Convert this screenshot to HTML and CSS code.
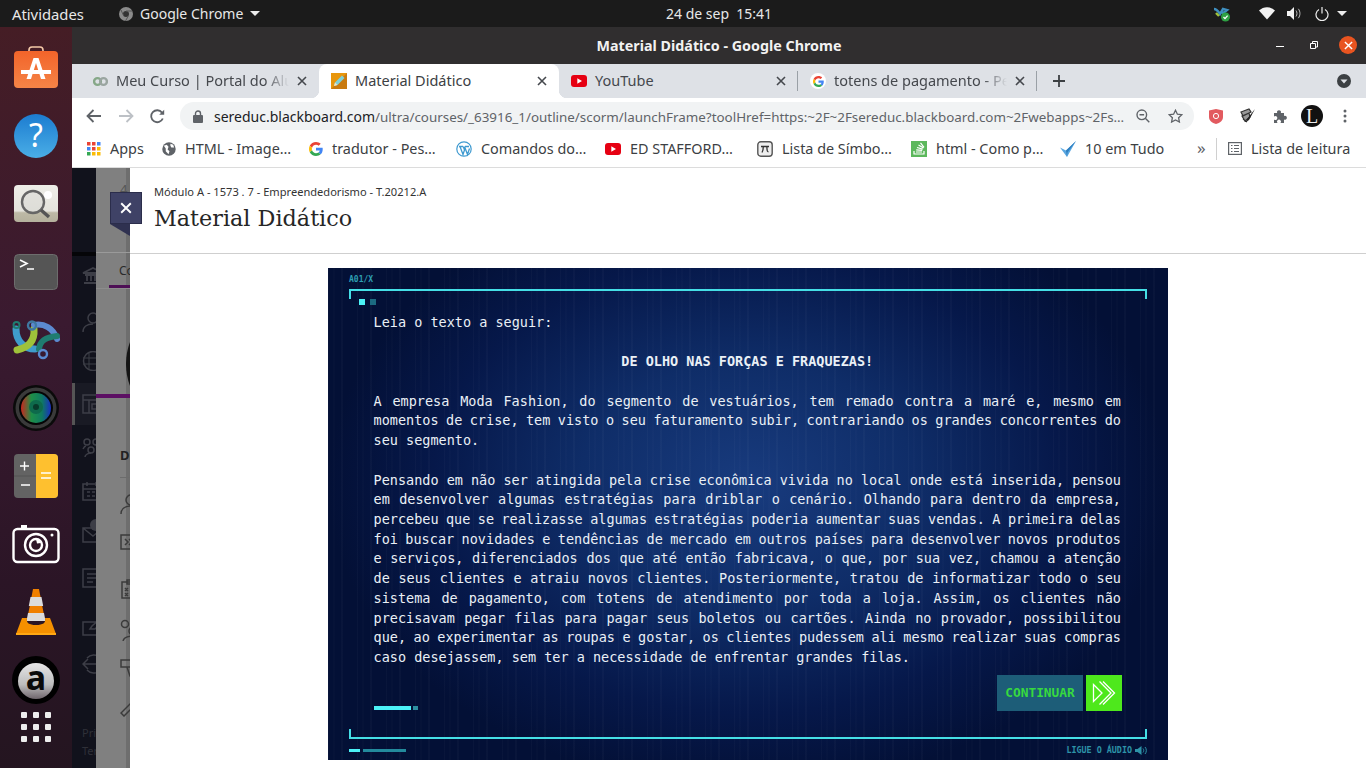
FILE: index.html
```html
<!DOCTYPE html>
<html lang="pt-BR">
<head>
    <meta charset="UTF-8">
    <meta name="viewport" content="width=device-width, initial-scale=1.0">
    <link rel="stylesheet" href="styles.css">
    <title>Material Didático - Google Chrome</title>
</head>
<body>

    <svg class="sprite" width="0" height="0">
        <symbol id="g-logo" viewBox="0 0 48 48">
            <path fill="#EA4335" d="M24 9.5c3.54 0 6.71 1.22 9.21 3.6l6.85-6.85C35.9 2.38 30.47 0 24 0 14.62 0 6.51 5.38 2.56 13.22l7.98 6.19C12.43 13.72 17.74 9.5 24 9.5z"/>
            <path fill="#4285F4" d="M46.98 24.55c0-1.57-.15-3.09-.38-4.55H24v9.02h12.94c-.58 2.96-2.26 5.48-4.78 7.18l7.73 6c4.51-4.18 7.09-10.36 7.09-17.65z"/>
            <path fill="#FBBC05" d="M10.53 28.59c-.48-1.45-.76-2.99-.76-4.59s.27-3.14.76-4.59l-7.98-6.19C.92 16.46 0 20.12 0 24c0 3.88.92 7.54 2.56 10.78l7.97-6.19z"/>
            <path fill="#34A853" d="M24 48c6.48 0 11.93-2.13 15.89-5.81l-7.73-6c-2.15 1.45-4.92 2.3-8.16 2.3-6.26 0-11.57-4.22-13.47-9.91l-7.98 6.19C6.51 42.62 14.62 48 24 48z"/>
        </symbol>
        <symbol id="yt-logo" viewBox="0 0 16 12">
            <rect width="16" height="12" rx="3" fill="#e60012"/>
            <path d="M6.3 3.3 11 6l-4.7 2.7z" fill="#fff"/>
        </symbol>
        <symbol id="x-mark" viewBox="0 0 10 10">
            <path d="M1 1l8 8M9 1l-8 8" stroke="currentColor" stroke-width="1.6" fill="none"/>
        </symbol>
    </svg>

    <!-- barra do sistema -->
    <header class="top-bar">
        <div class="top-left">
            <span class="top-activities">Atividades</span>
            <span class="top-app">
                <svg width="14" height="14" viewBox="0 0 14 14"><circle cx="7" cy="7" r="7" fill="#8b8b8b"/><circle cx="7" cy="7" r="3" fill="#333"/><path d="M7 4h6M4.5 8.5 2 3M9.5 8.5 6.5 14" stroke="#555" stroke-width="1"/></svg>
                Google Chrome
                <i class="caret"></i>
            </span>
        </div>
        <div class="top-clock">24 de sep&nbsp;&nbsp;15:41</div>
        <div class="top-tray">
            <svg class="tray-app" width="18" height="16" viewBox="0 0 18 16"><path d="M1 3c3 0 4 2 6 5l3-5 4 1-5 4" stroke="#3f8fc0" stroke-width="2.4" fill="none"/><path d="M3 7l3 3" stroke="#9fc23a" stroke-width="2.4"/><circle cx="12.5" cy="11" r="4.5" fill="#2ea043"/><path d="M10.5 11l1.5 1.6 2.6-3" stroke="#fff" stroke-width="1.3" fill="none"/></svg>
            <svg class="tray-wifi" width="16" height="13" viewBox="0 0 16 13"><path d="M0 3.6C4.5-.9 11.5-.9 16 3.6L8 12.5z" fill="#f2f2f2"/></svg>
            <svg class="tray-sound" width="15" height="13" viewBox="0 0 15 13"><path d="M0 4h3l4-4v13l-4-4H0z" fill="#f2f2f2"/><path d="M9 3.5c1.3 1.6 1.3 4.4 0 6M11.3 1.8c2.2 2.7 2.2 6.7 0 9.4" stroke="#bbb" stroke-width="1" fill="none"/></svg>
            <svg class="tray-power" width="14" height="14" viewBox="0 0 14 14"><path d="M4 2.4a6 6 0 1 0 6 0M7 0v6.5" stroke="#efefef" stroke-width="1.2" fill="none"/></svg>
            <i class="caret"></i>
        </div>
    </header>

    <div class="desktop">

        <!-- dock -->
        <nav class="dock">
            <div class="dock-item">
                <svg width="44" height="44" viewBox="0 0 44 44"><path d="M15 7V4a3 3 0 0 1 3-3h8a3 3 0 0 1 3 3v3" stroke="#f4c9a8" stroke-width="1.6" fill="none"/><defs><linearGradient id="bag-bg" x1="0" y1="0" x2="0" y2="1"><stop offset="0" stop-color="#f2642a"/><stop offset="1" stop-color="#f58447"/></linearGradient></defs><rect y="5" width="44" height="37" rx="4" fill="url(#bag-bg)"/><path d="M7 24h30v4H7zM19.5 12h5l7 21h-4.5l-5-16-5 16h-4.5z" fill="#fff"/></svg>
            </div>
            <div class="dock-item">
                <svg width="44" height="44" viewBox="0 0 44 44"><defs><linearGradient id="help-bg" x1="0" y1="0" x2="0" y2="1"><stop offset="0" stop-color="#1c7cd0"/><stop offset="1" stop-color="#4aaee6"/></linearGradient></defs><circle cx="22" cy="22" r="22" fill="url(#help-bg)"/><text x="22" y="33" class="help-mark">?</text></svg>
            </div>
            <div class="dock-item">
                <svg width="46" height="38" viewBox="0 0 46 38"><defs><linearGradient id="search-bg" x1="0" y1="0" x2="0" y2="1"><stop offset="0" stop-color="#eeeee8"/><stop offset=".7" stop-color="#e4e3dc"/><stop offset=".75" stop-color="#bdb9a6"/><stop offset="1" stop-color="#b5b19d"/></linearGradient></defs><rect x="1" width="44" height="37" rx="4" fill="url(#search-bg)"/><circle cx="35" cy="10" r="4" fill="#fff"/><circle cx="20" cy="17" r="11" fill="#d8d8d4" fill-opacity=".5" stroke="#666" stroke-width="2.4"/><path d="M28 25l8 7" stroke="#555" stroke-width="3.4"/></svg>
            </div>
            <div class="dock-item">
                <svg width="44" height="36" viewBox="0 0 44 36"><rect x=".5" y=".5" width="43" height="35" rx="4" fill="#555" stroke="#6d6d6d"/><path d="M6 6l7 3.5-7 3.5M13 15h7" stroke="#fff" stroke-width="1.6" fill="none"/></svg>
            </div>
            <div class="dock-item">
                <svg width="48" height="38" viewBox="0 0 48 38"><path d="M4 8c0 12 8 20 19 20" stroke="#3f9ccb" stroke-width="7" stroke-linecap="round" fill="none"/><path d="M22 8c1 14-8 19-17 21" stroke="#9fc23a" stroke-width="7" stroke-linecap="round" fill="none"/><path d="M22 4c10-2 19 3 23 14" stroke="#5b8ad0" stroke-width="6" stroke-linecap="round" fill="none"/><path d="M27 28c1-9 8-12 18-13" stroke="#1f7c70" stroke-width="6" stroke-linecap="round" fill="none"/><circle cx="20" cy="4.5" r="4" fill="none" stroke="#3f78a0" stroke-width="2.4"/><circle cx="4.5" cy="4" r="3" fill="none" stroke="#1f7c70" stroke-width="2"/><circle cx="31" cy="33" r="4" fill="none" stroke="#5b8ad0" stroke-width="2.4"/></svg>
            </div>
            <div class="dock-item">
                <svg width="46" height="46" viewBox="0 0 46 46"><defs><linearGradient id="lens-bg" x1="0" y1="0" x2="1" y2="0"><stop offset="0" stop-color="#c8281e"/><stop offset=".35" stop-color="#1e8f48"/><stop offset=".7" stop-color="#0e7a62"/><stop offset="1" stop-color="#1a2fc0"/></linearGradient></defs><circle cx="23" cy="23" r="23" fill="#0a0a0a"/><circle cx="23" cy="23" r="20.5" fill="#3a3a3a"/><circle cx="23" cy="23" r="17" fill="#050505"/><circle cx="23" cy="23" r="15" fill="url(#lens-bg)"/><circle cx="23" cy="22" r="7" fill="#0e6a4c"/><circle cx="23" cy="22" r="3" fill="#083a2b"/></svg>
            </div>
            <div class="dock-item">
                <svg width="44" height="44" viewBox="0 0 44 44"><rect width="44" height="44" rx="4" fill="#636363"/><path d="M22 0h18a4 4 0 0 1 4 4v36a4 4 0 0 1-4 4H22z" fill="#fec02f"/><path d="M0 22h22" stroke="#555"/><path d="M6 12h9M10.5 7.5v9M7 31h9M27 19h10M27 24h10" stroke="#fff" stroke-width="1.4"/></svg>
            </div>
            <div class="dock-item">
                <svg width="48" height="40" viewBox="0 0 48 40"><path d="M9 4V1h6v3" fill="#fff"/><rect x="1.5" y="5" width="45" height="33" rx="4" fill="none" stroke="#fff" stroke-width="2.4"/><circle cx="40" cy="11" r="1.5" fill="#fff"/><circle cx="24" cy="21" r="11" fill="none" stroke="#fff" stroke-width="2.4"/><circle cx="24" cy="21" r="6" fill="none" stroke="#fff" stroke-width="2.4"/><path d="M24 15a6 6 0 0 1 5 4l-4 .5z" fill="#fff"/></svg>
            </div>
            <div class="dock-item">
                <svg width="40" height="46" viewBox="0 0 40 46"><path d="M17 0h6l5 26H12z" fill="#f08000"/><path d="M14.5 8h11l1.700 9H12.800zM12 24h16l1.500 8h-19z" fill="#dcdcdc"/><path d="M6 29 0 45h40l-6-16h-5c1 5-2 7-9 7s-10-2-9-7z" fill="#f59000"/><path d="M0 44h40v2H0z" fill="#ffa814"/></svg>
            </div>
            <div class="dock-item">
                <svg width="48" height="48" viewBox="0 0 48 48"><defs><linearGradient id="a-bg" x1="0" y1="0" x2="0" y2="1"><stop offset="0" stop-color="#e6e6e6"/><stop offset=".6" stop-color="#bdbdbd"/><stop offset="1" stop-color="#6f666c"/></linearGradient></defs><circle cx="24" cy="24" r="24" fill="#000"/><circle cx="24" cy="25" r="18" fill="url(#a-bg)"/><text x="24" y="34" class="a-mark">a</text></svg>
            </div>
            <div class="dock-grid">
                <i></i><i></i><i></i><i></i><i></i><i></i><i></i><i></i><i></i>
            </div>
        </nav>

        <div class="browser">

            <div class="title-bar">
                <span class="title-text">Material Didático - Google Chrome</span>
                <div class="window-controls">
                    <i class="win-min"></i>
                    <svg class="win-restore" width="8" height="8" viewBox="0 0 8 8"><path d="M2.5 2V.5h5V6H6M.5 2.5h5v5h-5z" stroke="#fff" fill="none"/></svg>
                    <span class="win-close"><svg width="9" height="9"><use href="#x-mark"/></svg></span>
                </div>
            </div>

            <div class="tab-strip">
                <div class="tab tab-first">
                    <svg width="15" height="11" viewBox="0 0 15 11"><circle cx="4.5" cy="5.5" r="3.4" fill="none" stroke="#86a888" stroke-width="2.4"/><circle cx="10.5" cy="5.5" r="3.4" fill="none" stroke="#9aa5a0" stroke-width="2.4"/></svg>
                    <span class="tab-name tab-fade">Meu Curso | Portal do Alu</span>
                    <svg class="tab-x" width="10" height="10"><use href="#x-mark"/></svg>
                </div>
                <div class="tab tab-active">
                    <svg width="16" height="16" viewBox="0 0 16 16"><rect width="16" height="16" fill="#e8960c"/><path d="M0 16 16 0v16z" fill="#c97a10"/><path d="M3 13l1-3.5 7-7 2.5 2.5-7 7z" fill="#7fd0d8"/><path d="M3 13l1-3.5 2.5 2.5z" fill="#f4e3c0"/></svg>
                    <span class="tab-name">Material Didático</span>
                    <svg class="tab-x" width="10" height="10"><use href="#x-mark"/></svg>
                </div>
                <div class="tab tab-sep">
                    <svg width="16" height="12"><use href="#yt-logo"/></svg>
                    <span class="tab-name">YouTube</span>
                    <svg class="tab-x" width="10" height="10"><use href="#x-mark"/></svg>
                </div>
                <div class="tab tab-sep">
                    <span class="tab-g"><svg width="11" height="11"><use href="#g-logo"/></svg></span>
                    <span class="tab-name tab-fade">totens de pagamento - Pe</span>
                    <svg class="tab-x" width="10" height="10"><use href="#x-mark"/></svg>
                </div>
                <svg class="tab-new" width="14" height="14" viewBox="0 0 14 14"><path d="M7 1v12M1 7h12" stroke="#3c4043" stroke-width="1.8"/></svg>
                <svg class="tab-search" width="14" height="14" viewBox="0 0 14 14"><circle cx="7" cy="7" r="7" fill="#3c4043"/><path d="M3.5 5.5h7L7 9.5z" fill="#dee1e6"/></svg>
            </div>

            <div class="tool-bar">
                <div class="nav-buttons">
                    <svg width="16" height="14" viewBox="0 0 16 14"><path d="M15 7H2M7.5 1 1.5 7l6 6" stroke="#5f6368" stroke-width="1.8" fill="none"/></svg>
                    <svg width="16" height="14" viewBox="0 0 16 14"><path d="M1 7h13M8.5 1l6 6-6 6" stroke="#bdc1c6" stroke-width="1.8" fill="none"/></svg>
                    <svg width="15" height="15" viewBox="0 0 15 15"><path d="M12.8 9.5A6 6 0 1 1 12 3.6" stroke="#5f6368" stroke-width="1.8" fill="none"/><path d="M14.2.8v5h-5z" fill="#5f6368"/></svg>
                </div>
                <div class="omnibox">
                    <svg width="10" height="13" viewBox="0 0 10 13"><path d="M2.5 5V3.5a2.5 2.5 0 0 1 5 0V5" stroke="#5f6368" stroke-width="1.4" fill="none"/><rect y="5" width="10" height="8" rx="1" fill="#5f6368"/></svg>
                    <span class="url"><b>sereduc.blackboard.com</b>/ultra/courses/_63916_1/outline/scorm/launchFrame?toolHref=https:~2F~2Fsereduc.blackboard.com~2Fwebapps~2Fs…</span>
                    <svg class="omni-zoom" width="14" height="14" viewBox="0 0 14 14"><circle cx="5.8" cy="5.8" r="4.8" fill="none" stroke="#5f6368" stroke-width="1.4"/><path d="M3.5 5.8h4.6M9.3 9.3l4 4" stroke="#5f6368" stroke-width="1.4"/></svg>
                    <svg width="15" height="14" viewBox="0 0 15 14"><path d="M7.5 1.2l1.900 4 4.400.5-3.200 3 .8 4.300-3.900-2.100-3.900 2.100.8-4.300-3.200-3 4.400-.5z" fill="none" stroke="#5f6368" stroke-width="1.3"/></svg>
                </div>
                <div class="extensions">
                    <svg width="14" height="15" viewBox="0 0 14 15"><path d="M0 1.5 7 0l7 1.500V8c0 3.500-3 6-7 7-4-1-7-3.500-7-7z" fill="#e25a5f"/><circle cx="7" cy="7" r="2.6" fill="none" stroke="#fff" stroke-width="1"/></svg>
                    <svg width="16" height="16" viewBox="0 0 16 16"><path d="M1 4l8-3 2 3-8 4zM2 8l7-3 1 4-5 4zM3 11l4 3" fill="#999" stroke="#333" stroke-width="1.2"/><path d="M15 1 7 11l-1 3 3-2z" fill="#222"/></svg>
                    <svg width="14" height="14" viewBox="0 0 14 14"><path d="M1 4h3.200a2 2 0 1 1 3.600 0H11v3a2 2 0 1 1 0 3.600V14H7.500a2 2 0 1 0-3 0H1v-3.500a2 2 0 1 0 0-3z" fill="#5f6368"/></svg>
                    <span class="avatar">L</span>
                    <svg width="4" height="14" viewBox="0 0 4 14"><circle cx="2" cy="2" r="1.5" fill="#5f6368"/><circle cx="2" cy="7" r="1.5" fill="#5f6368"/><circle cx="2" cy="12" r="1.5" fill="#5f6368"/></svg>
                </div>
            </div>

            <div class="bookmarks">
                <div class="bm-list">
                    <div class="bm">
                        <svg width="14" height="14" viewBox="0 0 14 14"><path d="M0 0h3.500v3.500H0zM5 0h3.500v3.500H5zM5 5h3.500v3.500H5z" fill="#ea4335"/><path d="M10 0h3.500v3.500H10zM0 5h3.500v3.500H0z" fill="#4285f4"/><path d="M10 5h3.500v3.500H10zM5 10h3.500v3.500H5zM10 10h3.500v3.500H10z" fill="#fbbc05"/><path d="M0 10h3.500v3.500H0z" fill="#34a853"/></svg>
                        Apps
                    </div>
                    <div class="bm">
                        <svg width="14" height="14" viewBox="0 0 15 15"><circle cx="7.5" cy="7.5" r="7.2" fill="#5f6368"/><path d="M2 4l3-1 2 2-1 3 2 2-1 3-3-3V7zM9 2l3 1 1 3-3 0-1-2z" fill="#fff"/></svg>
                        HTML - Image…
                    </div>
                    <div class="bm">
                        <svg width="14" height="14"><use href="#g-logo"/></svg>
                        tradutor - Pes…
                    </div>
                    <div class="bm">
                        <svg width="16" height="16" viewBox="0 0 16 16"><circle cx="8" cy="8" r="7.2" fill="none" stroke="#3f9ad0" stroke-width="1.2"/><path d="M3 5.500h4M9 5.500h4M4 5.500l3 8 1.500-4.500-1.200-3.500M8.500 5.500l3 8 2-6" fill="none" stroke="#3f9ad0" stroke-width="1.3"/></svg>
                        Comandos do…
                    </div>
                    <div class="bm">
                        <svg width="16" height="12"><use href="#yt-logo"/></svg>
                        ED STAFFORD…
                    </div>
                    <div class="bm">
                        <svg width="16" height="16" viewBox="0 0 16 16"><rect x=".8" y=".8" width="14.4" height="14.4" rx="3" fill="#eee" stroke="#555" stroke-width="1.4"/><path d="M4 5.500h8M6.300 5.500c0 3-.3 4.500-1.300 6M10 5.500c-.2 2.500 0 5 1.500 5.500" stroke="#333" stroke-width="1.3" fill="none"/></svg>
                        Lista de Símbo…
                    </div>
                    <div class="bm">
                        <svg width="16" height="16" viewBox="0 0 16 16"><rect width="16" height="16" fill="#5cb85c"/><path d="M3 10v3h10v-3M5 11h6M5.200 8.800l6 .6M6 6.500l5.700 1.600M7.500 4l5 3M9.500 1.800l3.500 4.600" stroke="#fff" stroke-width="1.2" fill="none"/></svg>
                        html - Como p…
                    </div>
                    <div class="bm">
                        <svg width="16" height="16" viewBox="0 0 16 16"><path d="M0 6.500 6 9.500 16 0 7 16z" fill="#5aa7e0"/><path d="M6 9.500 16 0 7.500 11.500 7 16z" fill="#2f7fc0"/></svg>
                        10 em Tudo
                    </div>
                </div>
                <span class="bm-more">»</span>
                <div class="bm-reading">
                    <svg width="14" height="13" viewBox="0 0 14 13"><rect x=".6" y=".6" width="12.8" height="11.8" fill="none" stroke="#5f6368" stroke-width="1.2"/><path d="M3 3.500h1.500M6 3.500h5M3 6.500h1.500M6 6.500h5M3 9.500h1.500M6 9.500h5" stroke="#5f6368" stroke-width="1.2"/></svg>
                    Lista de leitura
                </div>
            </div>

            <div class="page">

                <!-- pagina do curso atras do painel, escurecida -->
                <div class="behind">
                    <div class="dim-nav">
                        <div class="dim-nav-head"></div>
                        <svg width="22" height="18" viewBox="0 0 22 18"><path d="M1 6 11 1l10 5zM3 8h16M5 8v6M9 8v6M13 8v6M17 8v6M2 16h18" stroke="#3d3e47" stroke-width="1.8" fill="none"/></svg>
                        <svg width="22" height="20" viewBox="0 0 22 20"><circle cx="11" cy="6" r="5" fill="none" stroke="#3d3e47" stroke-width="1.5"/><path d="M1 20c0-5 4-8 10-8" stroke="#3d3e47" stroke-width="1.5" fill="none"/></svg>
                        <svg width="22" height="20" viewBox="0 0 22 20"><circle cx="11" cy="10" r="9.5" fill="none" stroke="#3d3e47" stroke-width="1.5"/><path d="M1 7h20M1 13h20M7 1v18M15 1v18" stroke="#3d3e47"/></svg>
                        <div class="dim-nav-active"><svg width="22" height="20" viewBox="0 0 22 20"><path d="M1 1h20v18H1zM1 6h20M7 6v13M10 10h6v5h-6z" fill="none" stroke="#3d3e47" stroke-width="1.5"/></svg></div>
                        <svg width="22" height="20" viewBox="0 0 22 20"><circle cx="5" cy="5" r="3" fill="none" stroke="#3d3e47" stroke-width="1.5"/><circle cx="14" cy="5" r="3" fill="none" stroke="#3d3e47" stroke-width="1.5"/><circle cx="9" cy="13" r="3" fill="none" stroke="#3d3e47" stroke-width="1.5"/><path d="M1 12c1-2 2-3 3-3M3 20c0-2 3-4 6-4" stroke="#3d3e47" stroke-width="1.5" fill="none"/></svg>
                        <svg width="22" height="20" viewBox="0 0 22 20"><path d="M1 3h20v16H1zM1 8h20M5 1v4M14 1v4M5 11h3M10 11h3M5 15h3M10 15h3" fill="none" stroke="#3d3e47" stroke-width="1.6"/></svg>
                        <svg width="22" height="24" viewBox="0 0 22 24"><path d="M1 9h20v14H1zM1 9l10 8 10-8" fill="none" stroke="#3d3e47" stroke-width="1.5"/><circle cx="14" cy="6" r="6" fill="#3d3e47"/></svg>
                        <svg width="22" height="20" viewBox="0 0 22 20"><path d="M1 1h20v18H1zM5 6h12M5 10h12M5 14h6" fill="none" stroke="#3d3e47" stroke-width="1.5"/></svg>
                        <svg width="22" height="18" viewBox="0 0 22 18"><path d="M1 4h16v13H1zM8 11l2-3 8-7 3 2-8 8z" fill="none" stroke="#3d3e47" stroke-width="1.5"/></svg>
                        <svg width="22" height="20" viewBox="0 0 22 20"><path d="M1 10h13M6 5l-5 5 5 5M5 4a9 9 0 1 1 0 12" fill="none" stroke="#3d3e47" stroke-width="1.5"/></svg>
                        <div class="dim-legal"><span>Pri</span><span>Ter</span></div>
                    </div>
                    <div class="dim-main">
                        <div class="dim-head"><span>4</span></div>
                        <div class="dim-tabs"><span>Co</span></div>
                        <div class="dim-cover"><i></i></div>
                        <div class="dim-side">
                            <b>D</b>
                            <i class="dim-rule"></i>
                            <svg width="22" height="20" viewBox="0 0 22 20"><circle cx="11" cy="6" r="5" fill="none" stroke="#3b3b3b" stroke-width="1.5"/><path d="M1 20c0-5 4-8 10-8" stroke="#3b3b3b" stroke-width="1.5" fill="none"/></svg>
                            <svg width="22" height="16" viewBox="0 0 22 16"><path d="M1 1h20v14H1zM5 5l3 3-3 3M9 5l3 3-3 3" fill="none" stroke="#3b3b3b" stroke-width="1.5"/></svg>
                            <svg width="22" height="20" viewBox="0 0 22 20"><path d="M2 3h18v16H2zM7 1h8v4H7zM5 9l3 3M8 9l-3 3M5 14l3 3M8 14l-3 3" fill="none" stroke="#3b3b3b" stroke-width="1.5"/></svg>
                            <svg width="22" height="22" viewBox="0 0 22 22"><circle cx="5" cy="5" r="3.5" fill="none" stroke="#3b3b3b" stroke-width="1.5"/><circle cx="13" cy="12" r="4" fill="none" stroke="#3b3b3b" stroke-width="1.5"/><path d="M3 22c1-4 5-5 10-5" stroke="#3b3b3b" stroke-width="1.5" fill="none"/></svg>
                            <svg width="22" height="18" viewBox="0 0 22 18"><path d="M1 1h20v7H1zM7 8l3 9h4l3-9" fill="none" stroke="#3b3b3b" stroke-width="1.5"/></svg>
                            <svg width="22" height="22" viewBox="0 0 22 22"><path d="M1 18l3 3L16 9l4-1 1-5-3 2-2-2 2-2-5 1-1 5z" fill="none" stroke="#3b3b3b" stroke-width="1.5"/></svg>
                        </div>
                    </div>
                </div>

                <button class="panel-close" type="button"><svg width="12" height="12"><use href="#x-mark"/></svg></button>

                <main class="panel">
                    <div class="panel-head">
                        <p class="panel-course">Módulo A - 1573 . 7 - Empreendedorismo - T.20212.A</p>
                        <h1 class="panel-title">Material Didático</h1>
                    </div>
                    <div class="panel-body">

                        <section class="slide">
                            <div class="slide-label">A01/X</div>
                            <div class="slide-frame">
                                <div class="slide-pips"><i></i><i></i></div>
                                <div class="slide-text">
                                    <p class="plain">Leia o texto a seguir:</p>
                                    <p class="slide-heading plain">DE OLHO NAS FORÇAS E FRAQUEZAS!</p>
                                    <p>A empresa Moda Fashion, do segmento de vestuários, tem remado contra a maré e, mesmo em momentos de crise, tem visto o seu faturamento subir, contrariando os grandes concorrentes do <span class="plain">seu segmento.</span></p>
                                    <p>Pensando em não ser atingida pela crise econômica vivida no local onde está inserida, pensou em desenvolver algumas estratégias para driblar o cenário. Olhando para dentro da empresa, percebeu que se realizasse algumas estratégias poderia aumentar suas vendas. A primeira delas foi buscar novidades e tendências de mercado em outros países para desenvolver novos produtos e serviços, diferenciados dos que até então fabricava, o que, por sua vez, chamou a atenção de seus clientes e atraiu novos clientes. Posteriormente, tratou de informatizar todo o seu sistema de pagamento, com totens de atendimento por toda a loja. Assim, os clientes não precisavam pegar filas para pagar seus boletos ou cartões. Ainda no provador, possibilitou que, ao experimentar as roupas e gostar, os clientes pudessem ali mesmo realizar suas compras <span class="plain">caso desejassem, sem ter a necessidade de enfrentar grandes filas.</span></p>
                                </div>
                                <div class="slide-actions">
                                    <div class="slide-progress"><i></i><i></i></div>
                                    <span class="btn-continue">CONTINUAR</span>
                                    <span class="btn-arrow">
                                        <svg width="24" height="26" viewBox="0 0 24 26"><path d="M1.5 4.5 10 13l-8.500 8.500zM7.500 1.500 19 13 7.500 24.500M11 1.500 22.500 13 11 24.500" fill="none" stroke="#fff" stroke-width="1.3"/></svg>
                                    </span>
                                </div>
                            </div>
                            <div class="slide-foot">
                                <div class="foot-bars"><i></i><i></i></div>
                                <div class="foot-audio">
                                    LIGUE O ÁUDIO
                                    <svg width="13" height="9" viewBox="0 0 13 9"><path d="M0 3h2.500L6.500 0v9L2.500 6H0z" fill="#2d93a8"/><path d="M8 2.500c1 1.200 1 2.800 0 4M10 1c1.800 2 1.800 5 0 7" stroke="#2d93a8" fill="none"/></svg>
                                </div>
                            </div>
                        </section>

                    </div>
                </main>
            </div>
        </div>
    </div>

</body>
</html>
```

FILE: styles.css
```css
html, body {
    margin: 0;
    height: 100%;
    overflow: hidden;
}

body {
    display: flex;
    flex-direction: column;
    width: 1366px;
    height: 768px;
    font-family: "Noto Sans", "Open Sans", sans-serif;
    background-color: #1b1b1b;
}

.sprite {
    display: block;
    height: 0;
}

svg {
    display: block;
    flex-shrink: 0;
}

.caret {
    display: block;
    width: 0;
    height: 0;
    border-left: 5px solid transparent;
    border-right: 5px solid transparent;
    border-top: 5px solid #ececec;
}

/* barra do sistema */
.top-bar {
    height: 27px;
    background-color: #1b1b1b;
    color: #e8e8e8;
    font-size: 14px;
    display: grid;
    grid-template-columns: 654px auto 1fr;
    align-items: center;
    padding-left: 12px;
    flex-shrink: 0;
}

.top-left {
    display: flex;
    align-items: center;
}

.top-activities {
    width: 107px;
    font-size: 14.8px;
}

.top-app {
    display: flex;
    align-items: center;
    gap: 7px;
}

.top-tray {
    display: flex;
    align-items: center;
    justify-content: flex-end;
    padding-right: 19px;
}

.tray-wifi {
    margin-left: 28px;
}

.tray-sound {
    margin-left: 12px;
}

.tray-power {
    margin-left: 13px;
}

.top-tray .caret {
    margin-left: 8px;
}

.desktop {
    flex: 1;
    display: flex;
    min-height: 0;
}

/* dock */
.dock {
    width: 72px;
    flex-shrink: 0;
    background: linear-gradient(180deg, #451d25 0%, #3a1a30 40%, #2b1526 75%, #241520 100%);
    display: flex;
    flex-direction: column;
    align-items: center;
    padding-top: 7px;
    box-sizing: border-box;
}

.dock svg {
    overflow: visible;
}

.dock-item {
    height: 68px;
    display: flex;
    align-items: center;
    justify-content: center;
    flex-shrink: 0;
}

.help-mark {
    font-family: "Noto Sans", sans-serif;
    font-size: 32px;
    fill: #fff;
    text-anchor: middle;
}

.a-mark {
    font-family: "Noto Sans", sans-serif;
    font-weight: 700;
    font-size: 34px;
    fill: #0a0a0a;
    text-anchor: middle;
}

.dock-grid {
    display: grid;
    grid-template-columns: repeat(3, 6px);
    gap: 6px;
    margin-top: -2px;
}

.dock-grid i {
    display: block;
    width: 6px;
    height: 6px;
    border-radius: 1px;
    background-color: #eeeeee;
}

/* janela do navegador */
.browser {
    flex: 1;
    display: flex;
    flex-direction: column;
    min-width: 0;
    background-color: #fff;
}

.title-bar {
    height: 37px;
    background-color: #302e2f;
    color: #f2f2f2;
    display: flex;
    align-items: center;
    justify-content: center;
    flex-shrink: 0;
    position: relative;
}

.title-text {
    font-size: 14.3px;
    font-weight: 700;
}

.window-controls {
    position: absolute;
    right: 9px;
    top: 9px;
    display: flex;
    align-items: center;
}

.win-min {
    display: block;
    width: 8px;
    height: 1px;
    background-color: #fff;
    margin-top: 3px;
}

.win-restore {
    margin: 0 21px 0 26px;
}

.win-close {
    width: 18px;
    height: 18px;
    border-radius: 50%;
    background-color: #e95420;
    color: #fff;
    display: flex;
    align-items: center;
    justify-content: center;
}

.tab-strip {
    height: 34px;
    background-color: #dee1e6;
    display: flex;
    align-items: center;
    flex-shrink: 0;
    color: #45484d;
    font-size: 14.5px;
}

.tab {
    height: 34px;
    width: 239px;
    box-sizing: border-box;
    display: flex;
    align-items: center;
    padding: 0 12px;
    gap: 8px;
    position: relative;
}

.tab-first {
    width: 247px;
    padding-left: 21px;
}

.tab-active {
    width: 240px;
    background-color: #fff;
    border-radius: 8px 8px 0 0;
    color: #3c4043;
}

.tab-active::before,
.tab-active::after {
    content: "";
    position: absolute;
    bottom: 0;
    width: 8px;
    height: 8px;
}

.tab-active::before {
    left: -8px;
    background: radial-gradient(circle at 0 0, transparent 8px, #fff 8.5px);
}

.tab-active::after {
    right: -8px;
    background: radial-gradient(circle at 100% 0, transparent 8px, #fff 8.5px);
}

.tab-sep::after {
    content: "";
    position: absolute;
    right: 0;
    top: 7px;
    height: 20px;
    width: 1px;
    background-color: #9aa0a6;
}

.tab-name {
    flex: 1;
    min-width: 0;
    padding-bottom: 2px;
    white-space: nowrap;
}

.tab-fade {
    -webkit-mask-image: linear-gradient(90deg, #000 86%, transparent 100%);
    mask-image: linear-gradient(90deg, #000 86%, transparent 100%);
}

.tab-x {
    color: #45484d;
}

.tab-g {
    width: 16px;
    height: 16px;
    border-radius: 50%;
    background-color: #fff;
    display: flex;
    align-items: center;
    justify-content: center;
    flex-shrink: 0;
}

.tab-new {
    margin-left: 15px;
}

.tab-search {
    margin-left: auto;
    margin-right: 15px;
}

.tool-bar {
    height: 32px;
    display: flex;
    align-items: flex-end;
    flex-shrink: 0;
    background-color: #fff;
}

.nav-buttons {
    display: flex;
    align-items: center;
    gap: 16px;
    height: 28px;
    padding-left: 14px;
    width: 108px;
    box-sizing: border-box;
}

.omnibox {
    width: 1014px;
    height: 28px;
    box-sizing: border-box;
    background-color: #f1f3f4;
    border-radius: 14px;
    display: flex;
    align-items: center;
    padding: 0 11px 0 13px;
    color: #5f6368;
    font-size: 13.4px;
}

.url {
    flex: 1;
    min-width: 0;
    margin-left: 11px;
    white-space: nowrap;
}

.url b {
    font-weight: 400;
    font-size: 14px;
    color: #202124;
}

.omni-zoom {
    margin: 0 18px 0 10px;
}

.extensions {
    flex: 1;
    height: 28px;
    display: flex;
    align-items: center;
    padding-left: 15px;
    gap: 17px;
}

.avatar {
    width: 22px;
    height: 22px;
    border-radius: 50%;
    background-color: #111;
    color: #eee;
    font-family: "Liberation Serif", serif;
    font-size: 20px;
    line-height: 22px;
    text-align: center;
    margin-left: -3px;
    margin-right: 3px;
}

.bookmarks {
    height: 38px;
    box-sizing: border-box;
    border-bottom: 1px solid #dcdcdc;
    display: flex;
    align-items: center;
    padding-left: 15px;
    color: #3c4043;
    font-size: 14.4px;
    flex-shrink: 0;
}

.bm-list {
    display: grid;
    grid-template-columns: 75px 147px 147px 149px 152px 154px 149px 137px;
    align-items: center;
    width: 1110px;
}

.bm {
    display: flex;
    align-items: center;
    gap: 9px;
    white-space: nowrap;
}

.bm-more {
    font-size: 17px;
    width: 19px;
    color: #5f6368;
    padding-bottom: 3px;
}

.bm-reading {
    display: flex;
    align-items: center;
    gap: 9px;
    border-left: 1px solid #d0d0d0;
    padding-left: 11px;
    height: 22px;
    white-space: nowrap;
}

/* area da pagina */
.page {
    flex: 1;
    display: flex;
    min-height: 0;
    position: relative;
}

.behind {
    width: 58px;
    flex-shrink: 0;
    display: flex;
    overflow: hidden;
}

.dim-nav {
    width: 14px;
    flex-shrink: 0;
    background-color: #11121c;
    overflow: hidden;
    display: grid;
    grid-template-rows: 88px 40px 52px 26px 60px 26px 62px 18px 76px 22px 52px 1fr;
    align-items: center;
    justify-items: start;
    padding-left: 10px;
}

.dim-nav-head {
    height: 84px;
    margin-left: -10px;
    width: 24px;
    border-bottom: 4px solid #050508;
}

.dim-nav-active {
    margin-left: -10px;
    padding: 11px 0 11px 7px;
    width: 17px;
    border-left: 3px solid #555;
    background-color: #191a24;
}

.dim-legal {
    align-self: end;
    padding-bottom: 10px;
    display: flex;
    flex-direction: column;
    gap: 3px;
    color: #2f3038;
    font-size: 11px;
}

.dim-main {
    flex: 1;
    min-width: 0;
    background-color: #808080;
    color: #2a2a2a;
    overflow: hidden;
    box-shadow: inset -4px 0 0 rgba(0, 0, 0, .14);
    display: flex;
    flex-direction: column;
}

.dim-head {
    height: 85px;
    box-sizing: border-box;
    border-bottom: 1px solid #9a9a9a;
    padding: 12px 0 0 24px;
    font-size: 13px;
    color: #555;
    flex-shrink: 0;
}

.dim-tabs {
    height: 36px;
    box-sizing: border-box;
    border-bottom: 1px solid #8c8c8c;
    padding: 9px 0 0 23px;
    font-size: 12px;
    white-space: nowrap;
    flex-shrink: 0;
    position: relative;
}

.dim-tabs::after {
    content: "";
    position: absolute;
    left: 13px;
    bottom: 0;
    width: 30px;
    height: 3px;
    background-color: #4d0f55;
}

.dim-cover {
    height: 105px;
    flex-shrink: 0;
    border-bottom: 4px solid #5c0f63;
    overflow: hidden;
    padding-left: 30px;
}

.dim-cover i {
    display: block;
    width: 124px;
    height: 124px;
    margin-top: 13px;
    border-radius: 50%;
    background-color: #151515;
}

.dim-side {
    padding: 47px 0 0 24px;
    display: grid;
    grid-template-rows: 20px 24px 30px 46px 48px 34px 42px 34px;
    align-items: center;
    justify-items: start;
    font-size: 13px;
    color: #222;
    white-space: nowrap;
}

.dim-rule {
    display: block;
    width: 20px;
    height: 1px;
    background-color: #6c6c6c;
}

.panel-close {
    position: absolute;
    z-index: 1;
    left: 38px;
    top: 24px;
    width: 32px;
    height: 32px;
    padding: 0;
    border: 1px solid #2b2d4b;
    background-color: #3f4266;
    color: #fff;
    display: flex;
    align-items: center;
    justify-content: center;
}

.panel-close::after {
    content: "";
    position: absolute;
    left: -1px;
    top: 31px;
    border-top: 12px solid #2f3150;
    border-left: 20px solid transparent;
}

.panel {
    flex: 1;
    min-width: 0;
    background-color: #fff;
    position: relative;
    display: flex;
    flex-direction: column;
}

.panel-head {
    height: 86px;
    box-sizing: border-box;
    border-bottom: 1px solid #cfcfcf;
    padding: 16px 0 0 24px;
    flex-shrink: 0;
}

.panel-course {
    margin: 0;
    font-size: 11.1px;
    line-height: 15px;
    color: #333;
}

.panel-title {
    margin: 2px 0 0;
    font-family: "DejaVu Serif", serif;
    font-weight: 400;
    font-size: 22.3px;
    line-height: 34px;
    color: #262626;
}

.panel-body {
    flex: 1;
    min-height: 0;
    padding: 14px 0 0 198px;
}

/* slide do scorm */
.slide {
    width: 840px;
    height: 492px;
    box-sizing: border-box;
    padding: 6px 21px 0;
    background-color: #031036;
    background-image:
        repeating-linear-gradient(90deg, rgba(255, 255, 255, .022) 0 1px, transparent 1px 5px, rgba(255, 255, 255, .012) 5px 7px, transparent 7px 13px, rgba(255, 255, 255, .022) 13px 15px, transparent 15px 29px),
        radial-gradient(ellipse 50% 62% at 50% 44%, #183b7e 0%, #0f2d68 40%, #06184a 75%, #031036 100%);
    font-family: "DejaVu Sans Mono", monospace;
    display: flex;
    flex-direction: column;
}

.slide-label {
    font-size: 8px;
    line-height: 11px;
    margin-bottom: 4px;
    color: #2d9fb3;
    font-weight: 700;
}

.slide-frame {
    height: 450px;
    box-sizing: border-box;
    border-top: 2px solid #45dfe6;
    border-bottom: 2px solid #45dfe6;
    padding: 8px 26px 0 24.5px;
    display: flex;
    flex-direction: column;
    position: relative;
}

.slide-frame::before,
.slide-frame::after {
    content: "";
    position: absolute;
    left: 0;
    right: 0;
    height: 8px;
    border-left: 2px solid #45dfe6;
    border-right: 2px solid #45dfe6;
}

.slide-frame::before {
    top: 0;
}

.slide-frame::after {
    bottom: 0;
}

.slide-pips {
    display: flex;
    gap: 5px;
    margin-left: -14.5px;
}

.slide-pips i {
    display: block;
    width: 6px;
    height: 6px;
    background-color: #4cf2f7;
}

.slide-pips i + i {
    background-color: #1c6a80;
}

/* word-spacing para caber 93 caracteres na linha justificada */
.slide-text {
    margin-top: 8px;
    color: #eaf0f6;
    font-size: 13.5px;
    line-height: 19.7px;
    word-spacing: -0.7px;
    text-align: justify;
}

.slide-text .plain {
    word-spacing: 0;
}

.slide-text p {
    margin: 0 0 19.7px;
}

.slide-text p:last-child {
    margin-bottom: 0;
}

.slide-heading {
    text-align: center;
    font-weight: 700;
}

.slide-actions {
    margin-top: 7px;
    margin-right: -1px;
    display: flex;
    align-items: flex-end;
    gap: 3px;
}

.slide-progress {
    margin-right: auto;
    margin-left: .5px;
    margin-bottom: 1px;
    display: flex;
    gap: 2px;
}

.slide-progress i {
    display: block;
    width: 37px;
    height: 4px;
    background-color: #4cf2f7;
}

.slide-progress i + i {
    width: 5px;
    background-color: #2d8fa0;
}

.btn-continue {
    width: 86px;
    height: 36px;
    background-color: #1d5d78;
    color: #37d93f;
    font-size: 12.8px;
    font-weight: 700;
    display: flex;
    align-items: center;
    justify-content: center;
}

.btn-arrow {
    width: 36px;
    height: 36px;
    background-color: #4ee81c;
    display: flex;
    align-items: center;
    justify-content: center;
}

.slide-foot {
    margin-top: 6px;
    display: flex;
    align-items: center;
    justify-content: space-between;
}

.foot-bars {
    display: flex;
    gap: 3px;
}

.foot-bars i {
    display: block;
    width: 11px;
    height: 3px;
    background-color: #4cf2f7;
}

.foot-bars i + i {
    width: 43px;
    background-color: #238a9c;
}

.foot-audio {
    display: flex;
    align-items: center;
    gap: 3px;
    margin-right: -1px;
    color: #2d93a8;
    font-size: 8.4px;
    font-weight: 700;
}
```
